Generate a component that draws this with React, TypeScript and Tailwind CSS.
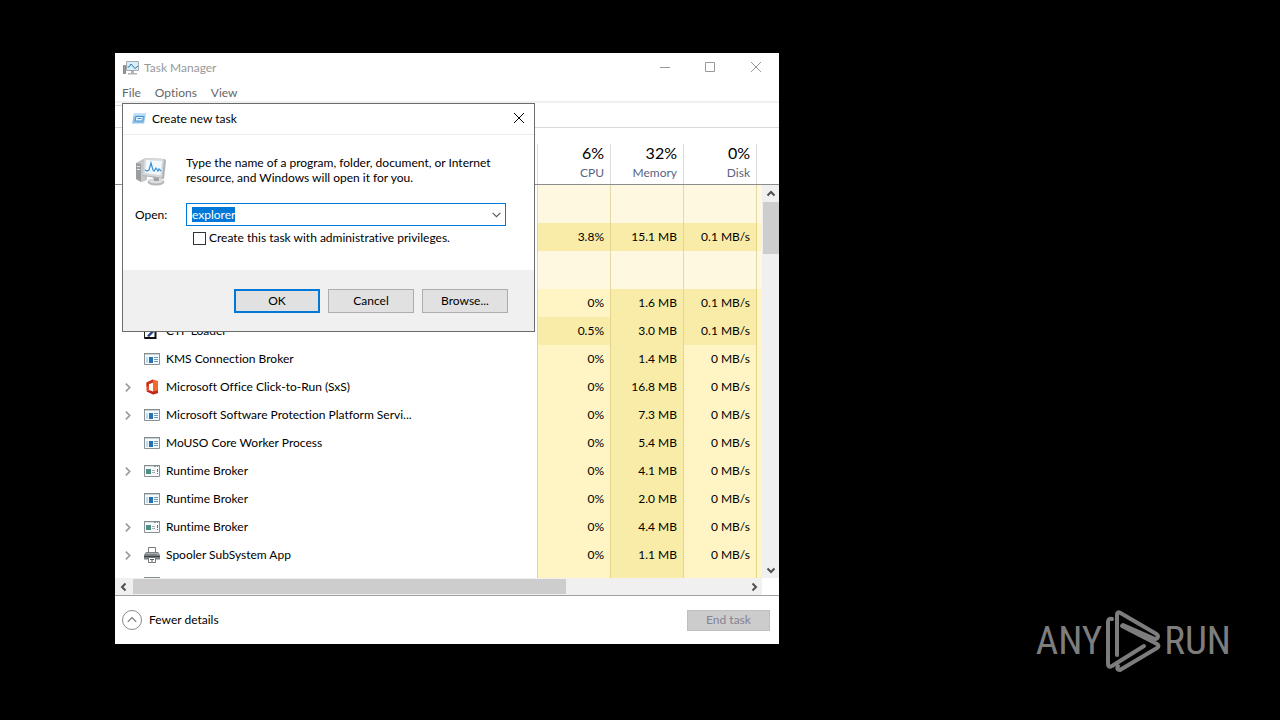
import { useEffect, useRef } from "react";
import { clsx } from "clsx";

type IconKind = "app" | "console" | "office" | "printer" | "ctf";

type Row = {
  name?: string;
  icon?: IconKind;
  expandable?: boolean;
  cpu: string;
  memory: string;
  disk: string;
};

const topRows: Row[] = [{ cpu: "3.8%", memory: "15.1 MB", disk: "0.1 MB/s" }];

const rows: Row[] = [
  { cpu: "0%", memory: "1.6 MB", disk: "0.1 MB/s" },
  { name: "CTF Loader", icon: "ctf", cpu: "0.5%", memory: "3.0 MB", disk: "0.1 MB/s" },
  { name: "KMS Connection Broker", icon: "app", cpu: "0%", memory: "1.4 MB", disk: "0 MB/s" },
  { name: "Microsoft Office Click-to-Run (SxS)", icon: "office", expandable: true, cpu: "0%", memory: "16.8 MB", disk: "0 MB/s" },
  { name: "Microsoft Software Protection Platform Servi...", icon: "app", expandable: true, cpu: "0%", memory: "7.3 MB", disk: "0 MB/s" },
  { name: "MoUSO Core Worker Process", icon: "app", cpu: "0%", memory: "5.4 MB", disk: "0 MB/s" },
  { name: "Runtime Broker", icon: "console", expandable: true, cpu: "0%", memory: "4.1 MB", disk: "0 MB/s" },
  { name: "Runtime Broker", icon: "app", cpu: "0%", memory: "2.0 MB", disk: "0 MB/s" },
  { name: "Runtime Broker", icon: "console", expandable: true, cpu: "0%", memory: "4.4 MB", disk: "0 MB/s" },
  { name: "Spooler SubSystem App", icon: "printer", expandable: true, cpu: "0%", memory: "1.1 MB", disk: "0 MB/s" },
];

const columns = [
  { total: "6%", label: "CPU" },
  { total: "32%", label: "Memory" },
  { total: "0%", label: "Disk" },
];

function Chevron({ dir, className }: { dir: "up" | "down" | "left" | "right"; className?: string }) {
  const paths = {
    up: "M1.5 6.5 5 3l3.5 3.5",
    down: "M1.5 3.5 5 7l3.5-3.5",
    left: "M6.5 1.5 3 5l3.5 3.5",
    right: "M3.5 1.5 7 5 3.5 8.5",
  };
  return (
    <svg viewBox="0 0 10 10" className={clsx("fill-none stroke-current", className ?? "size-[10px]")}>
      <path d={paths[dir]} />
    </svg>
  );
}

function ProcessIcon({ kind }: { kind: IconKind }) {
  if (kind === "office") {
    return (
      <svg viewBox="0 0 16 16" className="size-4">
        <path d="M9 .5 2.500 3.500v9l2.500-1.500V5l4-1.500z" fill="#e8491f" />
        <path d="M9 .5 14 2v12l-5 1.500z" fill="#f4682c" />
        <path d="M9 12.500 5 11l-2.500 1.500L9 15.500l5-1.500v-2.500z" fill="#c4261d" />
        <path d="M9 .5v3L5 5v1.500L2.500 8V3.500z" fill="#c9321d" />
      </svg>
    );
  }
  if (kind === "printer") {
    return (
      <svg viewBox="0 0 16 16" className="size-4">
        <path d="M4.500 6V.5h7V6" fill="#fff" stroke="#777" />
        <path d="M2 5h12l2 3v4.500H0V8z" fill="#7b8185" />
        <path d="M0 9h16v1H0z" fill="#3f4448" />
        <path d="M2 6.500h12" stroke="#a9b0b3" />
        <path d="M4.500 10.500h7v5h-7z" fill="#fff" stroke="#777" />
        <path d="M6 12.500h4M7 14h2" stroke="#56656e" />
        <path d="M13 7.500h1.500" stroke="#7fd08a" />
      </svg>
    );
  }
  if (kind === "ctf") {
    return (
      <svg viewBox="0 0 16 16" className="size-4">
        <path d="M.5 3.500h11v12H.5z" fill="#fff" stroke="#222" />
        <path d="M3 13 11 4v4l-6 6z" fill="#1d3f94" />
        <path d="M1 15h10.500V8" fill="none" stroke="#111" strokeWidth="2" />
      </svg>
    );
  }
  return (
    <svg viewBox="0 0 16 16" className="size-4">
      <path d="M.5 2.500h15v11H.5z" fill="#f7f9fa" stroke="#8a9296" />
      <path d="M0 2h16v2H0z" fill="#858d91" />
      {kind === "app" ? (
        <>
          <path d="M1 3.500h14" stroke="#c4d3dc" />
          <path d="M5 6h4v6H5z" fill="#2472b3" />
          <path d="M2 6h2v6H2z" fill="#bcdcee" />
          <path d="M10 6.500h4M10 8.500h4M10 10.500h4" stroke="#6e9bbd" />
        </>
      ) : (
        <>
          <path d="M1 3.500h9M12 3.500h1M14 3.500h1" stroke="#dce3e5" />
          <path d="M2 6h5v5H2z" fill="#4c8f86" />
          <path d="M8 7.500h3M8 9.500h3" stroke="#a5b2b6" />
          <path d="M13.500 6v3M13.500 10v1" stroke="#55787c" />
        </>
      )}
    </svg>
  );
}

function TaskManagerIcon() {
  return (
    <svg viewBox="0 0 16 16" className="size-4">
      <path d="M.5 5.500h2v8h-2z" fill="#9a9ea1" stroke="#888" />
      <path d="M3.500 1.500h12v9h-12z" fill="#d6edfa" stroke="#a5aaae" />
      <path d="M4.500 7h1.500l2-3 4 4.500 3-2.500" fill="none" stroke="#2b78b0" />
      <path d="M8 11h3v2h3v1.500H5V13h3z" fill="#b0b4b7" />
    </svg>
  );
}

function ComputerIcon() {
  return (
    <svg viewBox="0 0 32 32" className="size-8">
      <path d="m1 8 7-4 4 1v20l-5 2-6-3z" fill="#c4c6c8" />
      <path d="m1 8 5 1v18l-5-3z" fill="#9b9ea0" />
      <path d="M2 11.500h3M2 14.500h3" stroke="#e8e8e8" />
      <ellipse cx="21" cy="27" rx="8.500" ry="3.500" fill="#b4b6b8" />
      <ellipse cx="21" cy="26" rx="7" ry="2.500" fill="#dedfe0" />
      <path d="m18 21 6 1v4h-5z" fill="#a0a2a4" />
      <path d="m9 3 21 1 1 2-2 18L8 21z" fill="#b0b2b4" />
      <path d="m9 3 20 1-2 18.500L8 20z" fill="#d6d8da" />
      <path d="m11 5 16 1-1.500 14L10 18z" fill="#f2f9fe" />
      <path d="m10 15 2 1 2-1 2-7 2 7 1 1 2-3 2 3 1-2 2 2" fill="none" stroke="#3a8fd0" strokeWidth="1.200" />
    </svg>
  );
}

function RunIcon() {
  return (
    <svg viewBox="0 0 16 16" className="size-4">
      <path d="M3 2.500h12l-2 10H1z" fill="#8fc4ea" />
      <path d="M3 2.500h12l-.4 2H2.600z" fill="#bfe0f5" />
      <path d="M5 5.500h7.500l-1 4.500H4z" fill="#e8f5fd" stroke="#4b91c9" />
      <path d="M6.500 7.500h4" stroke="#4b91c9" />
    </svg>
  );
}

function GroupRow() {
  return (
    <tr className="h-[38px]">
      <td />
      <td className="border-l border-[#e3d9a8] bg-[#fff8e1]" />
      <td className="border-l border-[#e3d9a8] bg-[#fff8e1]" />
      <td className="border-l border-[#e3d9a8] bg-[#fff8e1]" />
      <td className="border-l border-[#e3d9a8] bg-[#fff8e1]" />
    </tr>
  );
}

function ProcessRow({ row }: { row: Row }) {
  const cell = "border-l border-[#e3d48e] p-0 pr-[6px] text-right";
  const shade = (hot: boolean) => (hot ? "bg-[#f9eca8]" : "bg-[#fff4c4]");
  return (
    <tr className="h-7">
      <td className="p-0">
        {row.name && row.icon && (
          <div className="flex items-center whitespace-nowrap">
            <span className="flex w-[29px] pl-[7px] text-[#999]">
              {row.expandable && (
                <button type="button" aria-label={`Expand ${row.name}`}>
                  <Chevron dir="right" className="size-[11px] stroke-[1.5]" />
                </button>
              )}
            </span>
            <ProcessIcon kind={row.icon} />
            <span className="pl-[6px]">{row.name}</span>
          </div>
        )}
      </td>
      <td className={clsx(cell, shade(row.cpu !== "0%"))}>{row.cpu}</td>
      <td className={clsx(cell, shade(true))}>{row.memory}</td>
      <td className={clsx(cell, shade(row.disk !== "0 MB/s"))}>{row.disk}</td>
      <td className={clsx("border-l border-[#e3d48e] p-0", shade(false))} />
    </tr>
  );
}

function ProcessTable() {
  return (
    <div className="flex h-[450px] overflow-hidden">
      <div className="min-w-0 flex-1">
        <table className="w-full table-fixed border-separate border-spacing-0">
          <colgroup>
            <col />
            <col className="w-[73px]" />
            <col className="w-[73px]" />
            <col className="w-[73px]" />
            <col className="w-[6px]" />
          </colgroup>
          <thead>
            <tr className="h-[57px]">
              <th className="border-b border-[#8c8c8c]" />
              {columns.map((c) => (
                <th key={c.label} className="border-b border-[#8c8c8c] p-0 align-bottom font-normal">
                  <div className="h-10 border-l border-[#dcdcdc] pr-[6px] text-right">
                    <div className="text-[16px] leading-[18px]">{c.total}</div>
                    <div className="pt-[3px] leading-4 text-[#5a6484]">{c.label}</div>
                  </div>
                </th>
              ))}
              <th className="border-b border-[#8c8c8c] p-0 align-bottom">
                <div className="h-10 border-l border-[#dcdcdc]" />
              </th>
            </tr>
          </thead>
          <tbody>
            <GroupRow />
            {topRows.map((row) => <ProcessRow key={row.memory} row={row} />)}
            <GroupRow />
            {rows.map((row) => <ProcessRow key={row.memory} row={row} />)}
            <tr className="h-7">
              <td className="p-0 pl-[29px]"><ProcessIcon kind="app" /></td>
              <td className="border-l border-[#e3d48e] bg-[#fff4c4]" />
              <td className="border-l border-[#e3d48e] bg-[#f9eca8]" />
              <td className="border-l border-[#e3d48e] bg-[#fff4c4]" />
              <td className="border-l border-[#e3d48e] bg-[#fff4c4]" />
            </tr>
          </tbody>
        </table>
      </div>
      <div className="flex w-[17px] flex-col">
        <div className="h-[57px] border-b border-[#8c8c8c]" />
        <div className="flex flex-1 flex-col bg-[#f0f0f0] text-[#505050]">
          <button type="button" aria-label="Scroll up" className="flex h-[17px] items-center justify-center">
            <Chevron dir="up" className="size-[10px] stroke-2" />
          </button>
          <div className="ml-px h-[52px] bg-[#cdcdcd]" />
          <button type="button" aria-label="Scroll down" className="mt-auto flex h-[17px] items-center justify-center">
            <Chevron dir="down" className="size-[10px] stroke-2" />
          </button>
        </div>
      </div>
    </div>
  );
}

function CreateTaskDialog() {
  const inputRef = useRef<HTMLInputElement>(null);
  useEffect(() => {
    inputRef.current?.focus();
    inputRef.current?.select();
  }, []);

  return (
    <div role="dialog" aria-labelledby="dialog-title" className="absolute top-[50px] left-[7px] w-[413px] border border-[#6b6b6b] bg-white">
      <div className="flex h-[31px] items-center border-b border-[#ececec] pr-[9px] pl-2">
        <RunIcon />
        <h2 id="dialog-title" className="flex-1 pl-[5px]">Create new task</h2>
        <button type="button" aria-label="Close">
          <svg viewBox="0 0 12 12" className="size-3 fill-none stroke-black">
            <path d="m1 0 10 10M11 0 1 10" />
          </svg>
        </button>
      </div>

      <div className="h-[135px] pt-5 pr-7 pl-3">
        <div className="flex">
          <ComputerIcon />
          <p className="pl-[19px] leading-[15px] whitespace-nowrap">
            Type the name of a program, folder, document, or Internet
            <br />
            resource, and Windows will open it for you.
          </p>
        </div>
        <div className="flex items-center pt-4">
          <label htmlFor="open" className="w-[51px]">Open:</label>
          <div className="flex h-[23px] flex-1 items-center border border-[#0078d7] pr-[3px] pl-[5px]">
            <input
              id="open"
              ref={inputRef}
              type="text"
              defaultValue="explorer"
              className="h-[15px] min-w-0 flex-1 leading-[15px] outline-none selection:bg-[#0078d7] selection:text-white"
            />
            <button type="button" aria-label="Show recent" className="text-[#555]">
              <Chevron dir="down" className="size-[11px]" />
            </button>
          </div>
        </div>
        <label className="flex items-center gap-[3px] pt-[4px] pl-[58px]">
          <input type="checkbox" className="size-[13px] appearance-none border border-[#333] bg-white" />
          Create this task with administrative privileges.
        </label>
      </div>

      <div className="flex h-[61px] items-start justify-end gap-[8px] bg-[#f0f0f0] pt-[19px] pr-[26px]">
        <button type="button" className="h-6 w-[86px] border-2 border-[#0078d7] bg-[#e1e1e1]">OK</button>
        <button type="button" className="h-6 w-[86px] border border-[#adadad] bg-[#e1e1e1]">Cancel</button>
        <button type="button" className="h-6 w-[86px] border border-[#adadad] bg-[#e1e1e1]">Browse...</button>
      </div>
    </div>
  );
}

function Watermark() {
  return (
    <div className="absolute right-[49px] bottom-[47px] flex items-center font-['Roboto_Condensed','Liberation_Sans_Narrow',sans-serif] text-[39px] leading-none text-[#7d7d7d]">
      <span>ANY</span>
      <svg viewBox="0 0 56 64" className="mx-[3px] h-16 w-14 fill-none stroke-current stroke-[4]" strokeLinejoin="round" strokeLinecap="round">
        <path d="M12 46V6q0-4 3.500-2l36 21q2.500 2 .5 4.500l-2 .5-32-14" />
        <path d="M7 10q-4-1-4 3v42q0 4 4 2l32-20" />
        <path d="m17 17 35 18q3 2 0 4L15 61q-4 0-2-4" />
      </svg>
      <span>RUN</span>
    </div>
  );
}

export default function App() {
  return (
    <main className="relative min-h-screen overflow-hidden bg-black pt-[53px] pl-[115px] font-['Lato','Open_Sans',sans-serif] text-[12px] leading-4 text-black [font-variant-ligatures:none]">
      <section className="relative w-[664px] max-w-full bg-white">
        <header className="flex h-[30px] items-center pl-2 text-[#999]">
          <TaskManagerIcon />
          <h1 className="flex-1 pl-[5px]">Task Manager</h1>
          <div className="flex gap-[34px] pr-[17px]">
            <button type="button" aria-label="Minimize">
              <svg viewBox="0 0 12 12" className="size-3 fill-none stroke-current"><path d="M2 5.500h10" /></svg>
            </button>
            <button type="button" aria-label="Maximize">
              <svg viewBox="0 0 12 12" className="size-3 fill-none stroke-current"><path d="M1.500.5h9v9h-9z" /></svg>
            </button>
            <button type="button" aria-label="Close">
              <svg viewBox="0 0 12 12" className="size-3 fill-none stroke-current"><path d="m1 0 10 10M11 0 1 10" /></svg>
            </button>
          </div>
        </header>
        <nav className="flex h-5 items-center gap-[14px] border-b-2 border-[#f0f0f0] pt-[2px] pl-[7px] text-[#666]">
          <button type="button">File</button>
          <button type="button">Options</button>
          <button type="button">View</button>
        </nav>
        <div className="flex h-[25px] border-b border-[#d9d9d9] pt-[2px]">
          <div className="w-[60px] border-t border-r border-[#d9d9d9]" />
        </div>

        <ProcessTable />

        <div className="flex h-[17px]">
          <div className="flex flex-1 items-center bg-[#f0f0f0] text-[#505050]">
            <button type="button" aria-label="Scroll left" className="flex w-[18px] justify-center">
              <Chevron dir="left" className="size-[10px] stroke-2" />
            </button>
            <div className="h-[15px] w-[433px] bg-[#cdcdcd]" />
            <button type="button" aria-label="Scroll right" className="ml-auto flex w-[17px] justify-center">
              <Chevron dir="right" className="size-[10px] stroke-2" />
            </button>
          </div>
          <div className="w-[17px]" />
        </div>

        <footer className="flex h-[49px] items-center justify-between border-t border-[#a0a0a0] pr-[9px] pl-[7px]">
          <button type="button" className="flex items-center gap-[7px]">
            <span className="flex size-5 items-center justify-center rounded-full border border-[#8a8a8a] text-[#777]">
              <Chevron dir="up" className="size-3" />
            </span>
            Fewer details
          </button>
          <button type="button" disabled className="h-[21px] w-[83px] border border-[#bfbfbf] bg-[#cccccc] text-[#838395]">
            End task
          </button>
        </footer>

        <CreateTaskDialog />
      </section>
      <Watermark />
    </main>
  );
}
